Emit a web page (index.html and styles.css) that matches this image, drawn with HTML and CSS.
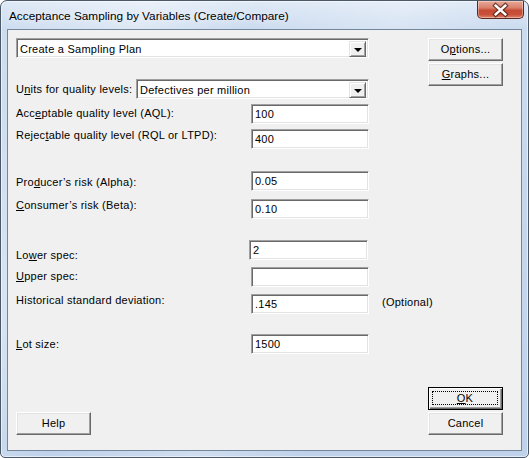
FILE: index.html
```html
<!DOCTYPE html>
<html>
<head>
<meta charset="utf-8">
<link rel="stylesheet" href="styles.css">
</head>
<body>
<div class="window">
  <div class="titlebar">
    <span class="title">Acceptance Sampling by Variables (Create/Compare)</span>
    <div class="close">
      <svg width="47" height="18" viewBox="0 0 47 18">
        <path d="M18.5 4.5 L28.5 13.5 M28.5 4.5 L18.5 13.5" stroke="#4a2117" stroke-width="5" stroke-linecap="square" opacity="0.75"/>
        <path d="M18.5 4.5 L28.5 13.5 M28.5 4.5 L18.5 13.5" stroke="#ffffff" stroke-width="2.6" stroke-linecap="square"/>
      </svg>
    </div>
  </div>
  <div class="client">
    <div class="main">
      <div class="form">
        <div class="combo plan">
          <span class="ctext">Create a Sampling Plan</span>
          <span class="arrow"><span class="tri"></span></span>
        </div>
        <div class="row r-units">
          <span class="label">U<u>n</u>its for quality levels:</span>
          <div class="combo units">
            <span class="ctext">Defectives per million</span>
            <span class="arrow"><span class="tri"></span></span>
          </div>
        </div>
        <div class="row r-aql">
          <span class="label">Acc<u>e</u>ptable quality level (AQL):</span>
          <span class="field">100</span>
        </div>
        <div class="row r-rql">
          <span class="label">Rejec<u>t</u>able quality level (RQL or LTPD):</span>
          <span class="field">400</span>
        </div>
        <div class="row r-prod">
          <span class="label">Pro<u>d</u>ucer’s risk (Alpha):</span>
          <span class="field">0.05</span>
        </div>
        <div class="row r-cons">
          <span class="label"><u>C</u>onsumer’s risk (Beta):</span>
          <span class="field">0.10</span>
        </div>
        <div class="row r-lower">
          <span class="label">Lo<u>w</u>er spec:</span>
          <span class="field shift">2</span>
        </div>
        <div class="row r-upper">
          <span class="label"><u>U</u>pper spec:</span>
          <span class="field"></span>
        </div>
        <div class="row r-hist">
          <span class="label">Historical standard deviation:</span>
          <span class="field">.145</span>
          <span class="note">(Optional)</span>
        </div>
        <div class="row r-lot">
          <span class="label"><u>L</u>ot size:</span>
          <span class="field">1500</span>
        </div>
      </div>
      <div class="side">
        <div class="btn">O<u>p</u>tions...</div>
        <div class="btn"><u>G</u>raphs...</div>
      </div>
    </div>
    <div class="bottom">
      <div class="btn">Help</div>
      <div class="side">
        <div class="btn default"><span class="focus"><u>O</u>K</span></div>
        <div class="btn">Cancel</div>
      </div>
    </div>
  </div>
</div>
</body>
</html>
```
FILE: styles.css
```css
* { box-sizing: border-box; }
html, body { margin: 0; padding: 0; background: #ffffff; }
body {
  font-family: "Liberation Sans", Arial, sans-serif;
  font-size: 11px;
  letter-spacing: 0.25px;
  color: #000;
}
.window {
  width: 529px;
  height: 458px;
  border: 1px solid #4b5868;
  border-radius: 7px 7px 5px 5px;
  background:
    linear-gradient(115deg, rgba(255,255,255,0) 0, rgba(255,255,255,0.35) 20%, rgba(255,255,255,0) 35%, rgba(255,255,255,0.25) 55%, rgba(255,255,255,0) 70%),
    linear-gradient(180deg, #dfe9f6 0, #cbdbef 28px, #bfd2ea 100%);
  box-shadow: inset 0 0 0 1px rgba(255,255,255,0.55);
  padding: 0 6px 6px 6px;
  display: flex;
  flex-direction: column;
}
.titlebar {
  height: 28px;
  display: flex;
  align-items: flex-start;
}
.title {
  font-family: "Liberation Sans", Arial, sans-serif;
  font-size: 11.8px;
  letter-spacing: 0;
  padding-left: 2px;
  margin-top: 8px;
  color: #000;
  text-shadow: 0 0 6px rgba(255,255,255,0.9);
}
.close {
  margin-left: auto;
  margin-right: -2px;
  width: 47px;
  height: 18px;
  border: 1px solid #5a2a20;
  border-top: none;
  border-radius: 0 0 5px 5px;
  background: linear-gradient(180deg, #e9a99a 0, #d9806c 40%, #c44a33 55%, #c9513a 80%, #e0846c 100%);
  box-shadow: inset 0 0 0 1px rgba(255,255,255,0.35);
  display: flex;
}
.close svg { display: block; }
.client {
  flex: 1;
  border: 1px solid #74869b;
  background: #f0f0f0;
  padding: 8px 18px 15px 8px;
  display: flex;
  flex-direction: column;
  justify-content: space-between;
}
.main { display: flex; }
.form { width: 353px; display: flex; flex-direction: column; }
.side { margin-left: auto; display: flex; flex-direction: column; gap: 2px; width: 75px; }
.bottom { display: flex; align-items: flex-end; }

.btn {
  width: 75px;
  height: 23px;
  border: 1px solid;
  border-color: #ffffff #696969 #696969 #ffffff;
  box-shadow: inset -1px -1px 0 #a0a0a0, inset 1px 1px 0 #e3e3e3;
  background: #f0f0f0;
  display: flex;
  align-items: center;
  justify-content: center;
  padding-bottom: 1px;
}
.btn.default {
  border: 1px solid #000;
  box-shadow: inset 1px 1px 0 #ffffff, inset -1px -1px 0 #696969, inset -2px -2px 0 #a0a0a0;
  padding: 3px 4px 4px 3px;
}
.focus {
  flex: 1;
  align-self: stretch;
  border: 1px dotted #000;
  display: flex;
  align-items: center;
  justify-content: center;
}

.row { display: flex; align-items: flex-start; height: 20px; }
.label { line-height: 13px; white-space: nowrap; }
.field {
  width: 118px;
  height: 20px;
  margin-left: auto;
  background: #fff;
  border: 1px solid;
  border-color: #a0a0a0 #ffffff #ffffff #a0a0a0;
  box-shadow: inset 1px 1px 0 #696969, inset -1px -1px 0 #e3e3e3;
  padding: 0 3px;
  line-height: 18px;
  flex-shrink: 0;
}
.field.shift { width: 119px; margin-right: 1px; }
.note {
  width: 0;
  flex-shrink: 0;
  margin-left: 13px;
  margin-right: -13px;
  padding-top: 2px;
  line-height: 13px;
  white-space: nowrap;
}

.combo {
  height: 20px;
  background: #fff;
  border: 1px solid;
  border-color: #a0a0a0 #ffffff #ffffff #a0a0a0;
  box-shadow: inset 1px 1px 0 #696969, inset -1px -1px 0 #e3e3e3;
  display: flex;
  padding: 2px 2px 2px 2px;
}
.plan { width: 353px; }
.units { width: 233px; margin-left: auto; }
.ctext { flex: 1; line-height: 16px; padding-left: 1px; white-space: nowrap; }
.arrow {
  width: 17px;
  height: 16px;
  background: #f0f0f0;
  border: 1px solid;
  border-color: #e3e3e3 #696969 #696969 #e3e3e3;
  box-shadow: inset 1px 1px 0 #fff, inset -1px -1px 0 #a0a0a0;
  display: flex;
  align-items: center;
  justify-content: center;
}
.tri {
  width: 0; height: 0;
  border-left: 4px solid transparent;
  border-right: 4px solid transparent;
  border-top: 4px solid #000;
  margin-top: 1px;
}

.r-units { margin-top: 21px; }
.r-units .label { padding-top: 4px; }
.r-aql { margin-top: 5px; }
.r-aql .label { padding-top: 3px; }
.r-rql { margin-top: 5px; }
.r-rql .label { padding-top: 0; }
.r-prod { margin-top: 22px; }
.r-prod .label { padding-top: 5px; }
.r-cons { margin-top: 8px; }
.r-cons .label { padding-top: 0; }
.r-lower { margin-top: 21px; }
.r-lower .label { padding-top: 9px; }
.r-upper { margin-top: 7px; }
.r-upper .label { padding-top: 3px; }
.r-hist { margin-top: 7px; }
.r-hist .label { padding-top: 0; }
.r-lot { margin-top: 20px; }
.r-lot .label { padding-top: 4px; }
```
